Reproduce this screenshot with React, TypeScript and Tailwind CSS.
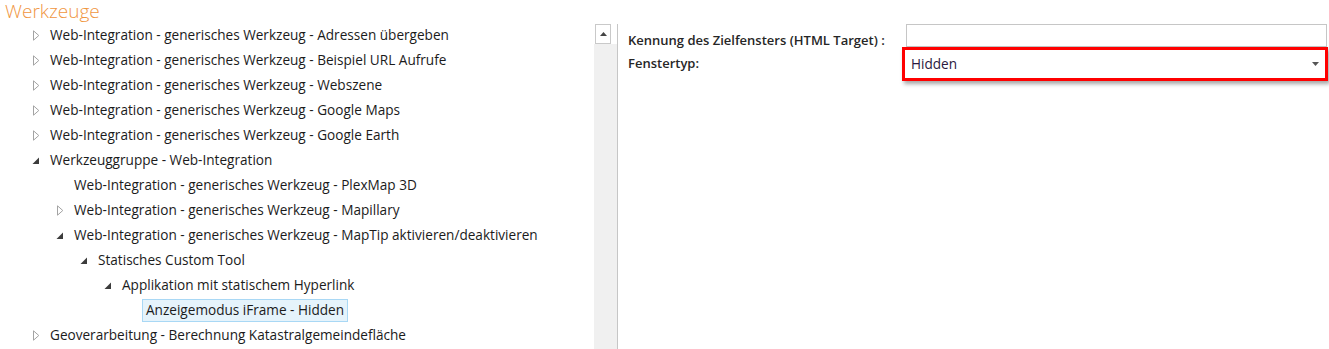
import React from "react";

type Node = {
  label: string;
  level: number;
  state: "collapsed" | "expanded" | "leaf";
  selected?: boolean;
};

const nodes: Node[] = [
  { label: "Web-Integration - generisches Werkzeug - Adressen übergeben", level: 0, state: "collapsed" },
  { label: "Web-Integration - generisches Werkzeug - Beispiel URL Aufrufe", level: 0, state: "collapsed" },
  { label: "Web-Integration - generisches Werkzeug - Webszene", level: 0, state: "collapsed" },
  { label: "Web-Integration - generisches Werkzeug - Google Maps", level: 0, state: "collapsed" },
  { label: "Web-Integration - generisches Werkzeug - Google Earth", level: 0, state: "collapsed" },
  { label: "Werkzeuggruppe - Web-Integration", level: 0, state: "expanded" },
  { label: "Web-Integration - generisches Werkzeug - PlexMap 3D", level: 1, state: "leaf" },
  { label: "Web-Integration - generisches Werkzeug - Mapillary", level: 1, state: "collapsed" },
  { label: "Web-Integration - generisches Werkzeug - MapTip aktivieren/deaktivieren", level: 1, state: "expanded" },
  { label: "Statisches Custom Tool", level: 2, state: "expanded" },
  { label: "Applikation mit statischem Hyperlink", level: 3, state: "expanded" },
  { label: "Anzeigemodus iFrame - Hidden", level: 4, state: "leaf", selected: true },
  { label: "Geoverarbeitung - Berechnung Katastralgemeindefläche", level: 0, state: "collapsed" },
];

// Einrückung pro Ebene
const indents = ["pl-[30px]", "pl-[54px]", "pl-[78px]", "pl-[102px]", "pl-[126px]"];

function Toggle({ state }: { state: Node["state"] }) {
  if (state === "collapsed") {
    return (
      <svg width="7" height="11" viewBox="0 0 7 11" className="ml-[3px]">
        <path d="M0.5 0.8 L5.8 5.5 L0.5 10.2 Z" fill="none" stroke="#a3a3a3" strokeWidth="1" />
      </svg>
    );
  }
  if (state === "expanded") {
    return (
      <svg width="8" height="8" viewBox="0 0 8 8" className="ml-[2px] mt-[2px]">
        <polygon points="7,0.5 7,7 0.5,7" fill="#3c3c3c" />
      </svg>
    );
  }
  return null;
}

function TreeRow({ node }: { node: Node }) {
  return (
    <div className={`flex items-center h-[25px] ${indents[node.level]}`}>
      <div className="w-[20px] flex items-center">
        <Toggle state={node.state} />
      </div>
      {node.selected ? (
        <span className="-ml-[4px] px-[3px] h-[23px] flex items-center border border-[#a9d8f5] bg-[#e5f3fb] text-[#1b1b1b]">
          {node.label}
        </span>
      ) : (
        <span className="text-[#1b1b1b] whitespace-nowrap">{node.label}</span>
      )}
    </div>
  );
}

export default function App() {
  return (
    <div className="w-[1329px] h-[349px] bg-white overflow-hidden font-['Open_Sans',sans-serif] text-[13.6px]">
      {/* Titel */}
      <div className="h-[22px] pl-[5px] text-[19px] leading-[22px] font-light text-[#f0963f]">Werkzeuge</div>

      <div className="flex">
        {/* Baum */}
        <div className="w-[594px] mt-[0.5px]">
          {nodes.map((n, i) => (
            <TreeRow key={i} node={n} />
          ))}
        </div>

        {/* Scrollleiste */}
        <div className="w-[24px] h-[327px] mt-[2px] flex flex-col border-r border-[#c6c6c6]">
          <div className="h-[20px] flex">
            <div className="w-[16px] h-[20px] ml-[1px] border border-[#c9c9c9] bg-white flex items-center justify-center">
              <svg width="7" height="4" viewBox="0 0 7 4">
                <polygon points="3.5,0 7,4 0,4" fill="#444" />
              </svg>
            </div>
          </div>
          <div className="flex-1 bg-[#f0f0f0]" />
        </div>

        {/* Eigenschaften */}
        <div className="flex-1 pl-[10px] mt-[2px] text-[13px]">
          <div className="flex h-[23px]">
            <div className="w-[278px] pt-[7px] font-semibold text-[#262626] whitespace-nowrap">
              Kennung des Zielfensters (HTML Target) :
            </div>
            <div className="w-[421px] h-[23px] border border-[#c6c6c6] bg-white" />
          </div>
          <div className="flex items-center h-[34px]">
            <div className="w-[274px] font-semibold text-[#262626]">Fenstertyp:</div>
            <div className="w-[426px] h-[34px] border-[3px] border-[#ff0000] bg-white shadow-[2px_3px_4px_rgba(0,0,0,0.35)] flex items-center justify-between pl-[6px] pr-[6px]">
              <span className="text-[#2a1840] font-normal text-[13.6px]">Hidden</span>
              <svg width="7" height="4" viewBox="0 0 7 4">
                <polygon points="0,0 7,0 3.5,4" fill="#555" />
              </svg>
            </div>
          </div>
        </div>
      </div>
    </div>
  );
}
